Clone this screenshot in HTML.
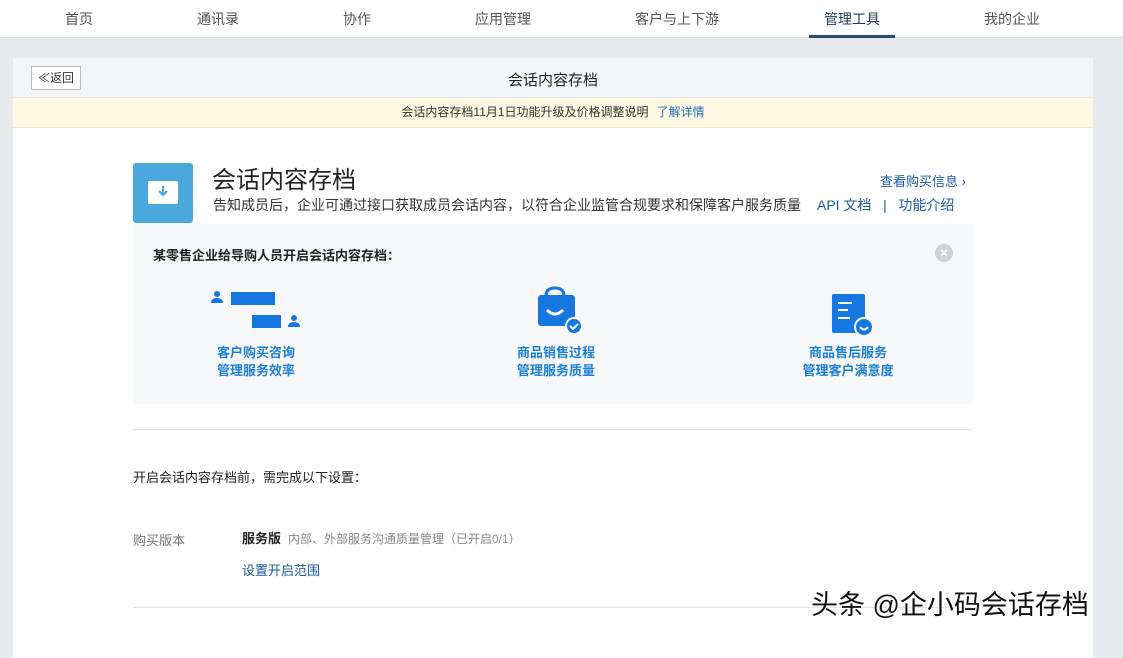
<!DOCTYPE html>
<html><head><meta charset="utf-8"><style>
*{margin:0;padding:0;box-sizing:border-box}
body{width:1123px;height:633px;overflow:hidden;background:#e8eaed;font-family:"Liberation Sans","Noto Sans CJK SC",sans-serif;color:#333;position:relative}
.nav{position:absolute;left:0;top:0;width:1123px;height:38px;background:#fff;border-bottom:1px solid #dcdde0}
.nav span{position:absolute;top:9px;font-size:14px;color:#555;transform:translateX(-50%)}
.nav .act{color:#1f3b55}
.ul{position:absolute;left:809px;top:35px;width:86px;height:3px;background:#2b4d6e}
.card{position:absolute;left:13px;top:58px;width:1080px;height:600px;background:#fff}
.hd{height:40px;background:#f4f5f6;border-bottom:1px solid #e4e5e7;position:relative}
.back{position:absolute;left:18px;top:8px;width:50px;height:24px;border:1px solid #bbb;background:#fff;font-size:12px;line-height:22px;text-align:center;color:#333}
.hd .t{position:absolute;left:0;right:0;top:11px;text-align:center;font-size:15px;color:#222}
.notice{height:30px;background:#fcf8e1;border-bottom:1px solid #efe9c9;text-align:center;font-size:12px;line-height:29px;color:#333}
.notice a{color:#2a6ebb;margin-left:8px}
.abs{position:absolute}
.blue{color:#1c7fd6}
</style></head><body>
<div class="nav">
<span style="left:79px">首页</span><span style="left:218px">通讯录</span><span style="left:357px">协作</span><span style="left:503px">应用管理</span><span style="left:677px">客户与上下游</span><span class="act" style="left:852px">管理工具</span><span style="left:1012px">我的企业</span>
<div class="ul"></div></div>
<div class="card">
<div class="hd"><div class="back">≪返回</div><div class="t">会话内容存档</div></div>
<div class="notice">会话内容存档11月1日功能升级及价格调整说明<a>了解详情</a></div>
</div>
<div class="abs" style="left:133px;top:163px;width:60px;height:60px;background:#4aa8dc;border-radius:3px">
<div class="abs" style="left:15px;top:18px;width:30px;height:23px;background:#fff;border-radius:2px"></div>
<svg class="abs" style="left:22px;top:20px" width="16" height="18" viewBox="0 0 16 18"><path d="M8 3v9M4 8l4 4 4-4" stroke="#4aa8dc" stroke-width="2.2" fill="none"/></svg>
</div>
<div class="abs" style="left:212px;top:160px;font-size:24px;color:#222">会话内容存档</div>
<div class="abs" style="left:213px;top:195px;font-size:14px;color:#333">告知成员后，企业可通过接口获取成员会话内容，以符合企业监管合规要求和保障客户服务质量</div>
<div class="abs" style="left:817px;top:195px;font-size:14px;color:#1d5aa5">API 文档 &nbsp;&nbsp;|&nbsp;&nbsp; 功能介绍</div>
<div class="abs" style="left:880px;top:171px;font-size:13px;color:#1d5aa5">查看购买信息 ›</div>
<div class="abs" style="left:133px;top:224px;width:840px;height:180px;background:#f7f8f9"></div>
<div class="abs" style="left:153px;top:245px;font-size:13px;font-weight:bold;color:#222">某零售企业给导购人员开启会话内容存档：</div>
<div class="abs" style="left:935px;top:244px;width:18px;height:18px;border-radius:50%;background:#d0d2d5;color:#fff;font-size:13px;line-height:18px;text-align:center;font-weight:bold">×</div>
<svg class="abs" style="left:208px;top:290px" width="96" height="42" viewBox="0 0 96 42"><circle cx="9" cy="4" r="3" fill="#1677e0"/><path d="M3 13q0-5 6-5t6 5z" fill="#1677e0"/><rect x="23" y="2" width="44" height="13" fill="#1677e0"/><rect x="44" y="25" width="29" height="13" fill="#1677e0"/><circle cx="86" cy="28" r="3" fill="#1677e0"/><path d="M80 37q0-5 6-5t6 5z" fill="#1677e0"/></svg>
<div class="abs blue" style="left:217px;top:344px;font-size:13px;line-height:18px;font-weight:bold">客户购买咨询<br>管理服务效率</div>
<svg class="abs" style="left:536px;top:286px" width="48" height="50" viewBox="0 0 48 50"><path d="M10 10q0-8 9-8t9 8" stroke="#1677e0" stroke-width="3" fill="none"/><rect x="2" y="9" width="37" height="31" rx="3" fill="#1677e0"/><path d="M11 24q8 8 16 0" stroke="#fff" stroke-width="3" fill="none"/><circle cx="38" cy="40" r="8" fill="#1677e0" stroke="#f7f8f9" stroke-width="2"/><path d="M34 40l3 3 5-5" stroke="#fff" stroke-width="2" fill="none"/></svg>
<div class="abs blue" style="left:517px;top:344px;font-size:13px;line-height:18px;font-weight:bold">商品销售过程<br>管理服务质量</div>
<svg class="abs" style="left:830px;top:292px" width="46" height="46" viewBox="0 0 46 46"><rect x="2" y="2" width="33" height="39" rx="2" fill="#1677e0"/><path d="M8 11h14M8 18h10M8 26h12" stroke="#fff" stroke-width="2"/><circle cx="34" cy="35" r="9" fill="#1677e0" stroke="#f7f8f9" stroke-width="2"/><path d="M30 35q4 5 8 0" stroke="#fff" stroke-width="2" fill="none"/></svg>
<div class="abs blue" style="left:788px;top:344px;font-size:13px;line-height:18px;font-weight:bold;text-align:center;width:120px;white-space:nowrap">商品售后服务<br>管理客户满意度</div>
<div class="abs" style="left:133px;top:429px;width:840px;height:1px;background:#e3e4e6"></div>
<div class="abs" style="left:133px;top:467px;font-size:13px;color:#222">开启会话内容存档前，需完成以下设置：</div>
<div class="abs" style="left:133px;top:530px;font-size:13px;color:#777">购买版本</div>
<div class="abs" style="left:242px;top:528px;font-size:13px;color:#222;font-weight:bold">服务版 <span style="font-weight:normal;font-size:12px;color:#888">&nbsp;内部、外部服务沟通质量管理（已开启0/1）</span></div>
<div class="abs" style="left:242px;top:560px;font-size:13px;color:#1d5aa5">设置开启范围</div>
<div class="abs" style="left:133px;top:607px;width:840px;height:1px;background:#e3e4e6"></div>
<div class="abs" style="left:811px;top:583px;font-size:27px;color:#111;white-space:nowrap;text-shadow:0 0 2px #fff,0 0 2px #fff">头条 @企小码会话存档</div>
</body></html>
